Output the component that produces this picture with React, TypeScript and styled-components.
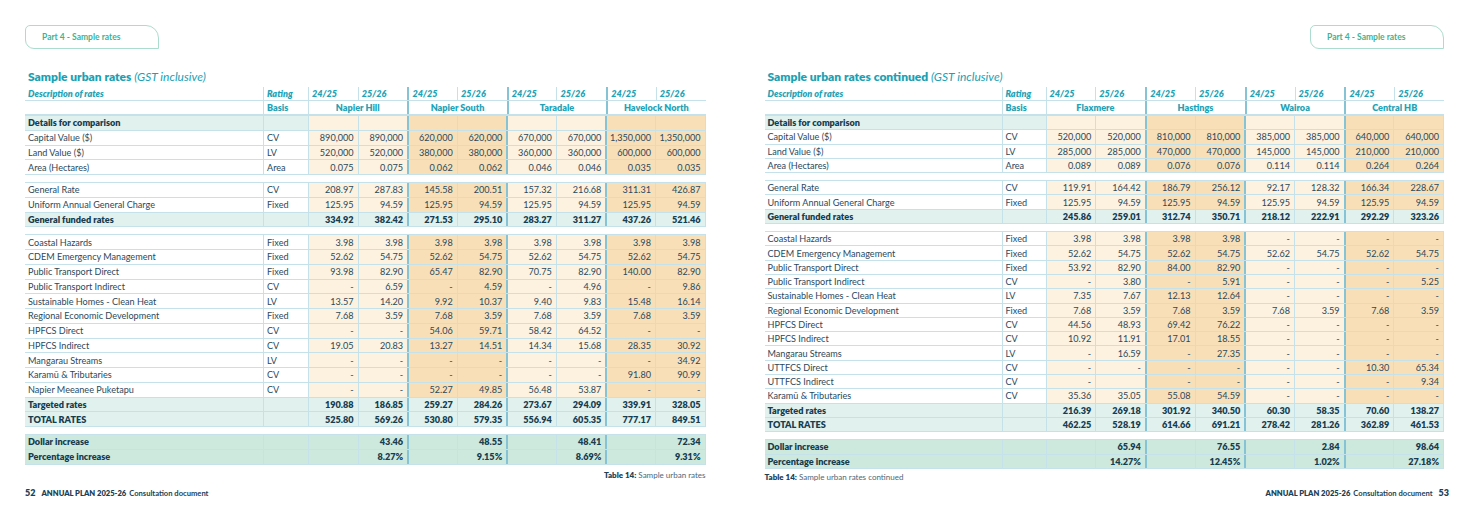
import styled, { createGlobalStyle } from "styled-components";

const GlobalStyle = createGlobalStyle`
  body {
    margin: 0;
    background: #ffffff;
    font-family: Lato, "Liberation Sans", sans-serif;
  }
`;

type Kind = "plain" | "section" | "subtotal" | "increase";
type Tone = "none" | "cream" | "tan" | "mint" | "deep";
type Edge = "none" | "thin" | "thick";

interface RowData {
  label: string;
  basis: string;
  values: string[];
  kind: Kind;
}

const tones: Record<Tone, string> = {
  none: "transparent",
  cream: "#fdf1df",
  tan: "#f8dfb8",
  mint: "#e1f1ee",
  deep: "#cde9de",
};

const Spread = styled.div`
  width: 1469px;
  height: 513px;
  display: grid;
  grid-template-columns: 1fr 1fr;
  overflow: hidden;
`;

const Page = styled.div<{ $side: "left" | "right" }>`
  display: flex;
  flex-direction: column;
  padding: ${(p) => (p.$side === "left" ? "25px 29px 15px 25px" : "25px 25px 15px 30px")};
`;

const Tab = styled.div<{ $side: "left" | "right" }>`
  align-self: ${(p) => (p.$side === "left" ? "flex-start" : "flex-end")};
  box-sizing: border-box;
  width: 134px;
  height: 24px;
  display: flex;
  align-items: center;
  padding-left: 16px;
  border: 1px solid #acdccd;
  border-radius: 5px 13px 0 9px;
  color: #3db38f;
  font-size: 8.5px;
  font-weight: 700;
`;

const Title = styled.h2<{ $after: number }>`
  margin: 21px 0 ${(p) => p.$after}px 3px;
  font-size: 12px;
  line-height: 14px;
  font-weight: 800;
  color: #1ba1b4;

  em {
    font-weight: 400;
  }
`;

const Grid = styled.div<{ $cols: string }>`
  --cols: ${(p) => p.$cols};
  display: flex;
  flex-direction: column;
`;

const Group = styled.div<{ $gap: number }>`
  margin-top: ${(p) => p.$gap}px;
  border-top: 1px solid #c5e2ea;
`;

const Row = styled.div<{ $h: number }>`
  box-sizing: border-box;
  display: grid;
  grid-template-columns: var(--cols);
  height: ${(p) => p.$h}px;
  border-bottom: 1px solid #c5e2ea;
  border-right: 1px solid #c5e2ea;
`;

const Cell = styled.div<{
  $tone: Tone;
  $edge: Edge;
  $align?: "left" | "right" | "center";
  $bold?: boolean;
  $span?: number;
}>`
  display: flex;
  align-items: center;
  justify-content: ${(p) =>
    p.$align === "right" ? "flex-end" : p.$align === "center" ? "center" : "flex-start"};
  grid-column: span ${(p) => p.$span ?? 1};
  padding: 0 4px 0 3px;
  background: ${(p) => tones[p.$tone]};
  border-left: ${(p) =>
    p.$edge === "thick" ? "2px solid #86c3d5" : p.$edge === "thin" ? "1px solid #c5e2ea" : "none"};
  font-size: 9.1px;
  font-weight: ${(p) => (p.$bold ? 800 : 400)};
  color: ${(p) => (p.$bold ? "#163c50" : "#2a495c")};
  white-space: nowrap;
  overflow: hidden;
`;

const HeadCell = styled(Cell)<{ $italic?: boolean }>`
  font-style: ${(p) => (p.$italic ? "italic" : "normal")};
  font-weight: 800;
  color: #1ea3b6;
`;

const Caption = styled.div<{ $align: "left" | "right"; $top: number }>`
  margin-top: ${(p) => p.$top}px;
  text-align: ${(p) => p.$align};
  font-size: 8px;
  line-height: 9px;
  color: #4b6879;

  b {
    color: #1d4257;
    font-weight: 800;
  }
`;

const Footer = styled.div<{ $align: "left" | "right" }>`
  margin-top: auto;
  display: flex;
  align-items: baseline;
  justify-content: ${(p) => (p.$align === "left" ? "flex-start" : "flex-end")};
  gap: 6px;
  margin-right: ${(p) => (p.$align === "right" ? "-5px" : "0")};
  color: #1c3f55;
  font-size: 7.6px;
  line-height: 10px;
`;

const PageNo = styled.span`
  font-size: 9px;
  font-weight: 800;
`;

const Plan = styled.span`
  b {
    font-weight: 800;
    margin-right: 3px;
  }
  span {
    font-weight: 700;
  }
`;

const v = (s: string) => s.split(" ").map((x) => (x === "_" ? "" : x));

const leftRegions = ["Napier Hill", "Napier South", "Taradale", "Havelock North"];
const rightRegions = ["Flaxmere", "Hastings", "Wairoa", "Central HB"];

const r = (label: string, basis: string, vals: string, kind: Kind = "plain"): RowData => ({
  label,
  basis,
  values: v(vals),
  kind,
});

const blank = "_ _ _ _ _ _ _ _";

const leftGroups: RowData[][] = [
  [
    r("Details for comparison", "", blank, "section"),
    r("Capital Value ($)", "CV", "890,000 890,000 620,000 620,000 670,000 670,000 1,350,000 1,350,000"),
    r("Land Value ($)", "LV", "520,000 520,000 380,000 380,000 360,000 360,000 600,000 600,000"),
    r("Area (Hectares)", "Area", "0.075 0.075 0.062 0.062 0.046 0.046 0.035 0.035"),
  ],
  [
    r("General Rate", "CV", "208.97 287.83 145.58 200.51 157.32 216.68 311.31 426.87"),
    r("Uniform Annual General Charge", "Fixed", "125.95 94.59 125.95 94.59 125.95 94.59 125.95 94.59"),
    r("General funded rates", "", "334.92 382.42 271.53 295.10 283.27 311.27 437.26 521.46", "subtotal"),
  ],
  [
    r("Coastal Hazards", "Fixed", "3.98 3.98 3.98 3.98 3.98 3.98 3.98 3.98"),
    r("CDEM Emergency Management", "Fixed", "52.62 54.75 52.62 54.75 52.62 54.75 52.62 54.75"),
    r("Public Transport Direct", "Fixed", "93.98 82.90 65.47 82.90 70.75 82.90 140.00 82.90"),
    r("Public Transport Indirect", "CV", "- 6.59 - 4.59 - 4.96 - 9.86"),
    r("Sustainable Homes - Clean Heat", "LV", "13.57 14.20 9.92 10.37 9.40 9.83 15.48 16.14"),
    r("Regional Economic Development", "Fixed", "7.68 3.59 7.68 3.59 7.68 3.59 7.68 3.59"),
    r("HPFCS Direct", "CV", "- - 54.06 59.71 58.42 64.52 - -"),
    r("HPFCS Indirect", "CV", "19.05 20.83 13.27 14.51 14.34 15.68 28.35 30.92"),
    r("Mangarau Streams", "LV", "- - - - - - - 34.92"),
    r("Karamū & Tributaries", "CV", "- - - - - - 91.80 90.99"),
    r("Napier Meeanee Puketapu", "CV", "- - 52.27 49.85 56.48 53.87 - -"),
    r("Targeted rates", "", "190.88 186.85 259.27 284.26 273.67 294.09 339.91 328.05", "subtotal"),
    r("TOTAL RATES", "", "525.80 569.26 530.80 579.35 556.94 605.35 777.17 849.51", "subtotal"),
  ],
  [
    r("Dollar increase", "", "_ 43.46 _ 48.55 _ 48.41 _ 72.34", "increase"),
    r("Percentage increase", "", "_ 8.27% _ 9.15% _ 8.69% _ 9.31%", "increase"),
  ],
];

const rightGroups: RowData[][] = [
  [
    r("Details for comparison", "", blank, "section"),
    r("Capital Value ($)", "CV", "520,000 520,000 810,000 810,000 385,000 385,000 640,000 640,000"),
    r("Land Value ($)", "LV", "285,000 285,000 470,000 470,000 145,000 145,000 210,000 210,000"),
    r("Area (Hectares)", "Area", "0.089 0.089 0.076 0.076 0.114 0.114 0.264 0.264"),
  ],
  [
    r("General Rate", "CV", "119.91 164.42 186.79 256.12 92.17 128.32 166.34 228.67"),
    r("Uniform Annual General Charge", "Fixed", "125.95 94.59 125.95 94.59 125.95 94.59 125.95 94.59"),
    r("General funded rates", "", "245.86 259.01 312.74 350.71 218.12 222.91 292.29 323.26", "subtotal"),
  ],
  [
    r("Coastal Hazards", "Fixed", "3.98 3.98 3.98 3.98 - - - -"),
    r("CDEM Emergency Management", "Fixed", "52.62 54.75 52.62 54.75 52.62 54.75 52.62 54.75"),
    r("Public Transport Direct", "Fixed", "53.92 82.90 84.00 82.90 - - - -"),
    r("Public Transport Indirect", "CV", "- 3.80 - 5.91 - - - 5.25"),
    r("Sustainable Homes - Clean Heat", "LV", "7.35 7.67 12.13 12.64 - - - -"),
    r("Regional Economic Development", "Fixed", "7.68 3.59 7.68 3.59 7.68 3.59 7.68 3.59"),
    r("HPFCS Direct", "CV", "44.56 48.93 69.42 76.22 - - - -"),
    r("HPFCS Indirect", "CV", "10.92 11.91 17.01 18.55 - - - -"),
    r("Mangarau Streams", "LV", "- 16.59 - 27.35 - - - -"),
    r("UTTFCS Direct", "CV", "- - - - - - 10.30 65.34"),
    r("UTTFCS Indirect", "CV", "- _ - - - - - 9.34"),
    r("Karamū & Tributaries", "CV", "35.36 35.05 55.08 54.59 - - - -"),
    r("Targeted rates", "", "216.39 269.18 301.92 340.50 60.30 58.35 70.60 138.27", "subtotal"),
    r("TOTAL RATES", "", "462.25 528.19 614.66 691.21 278.42 281.26 362.89 461.53", "subtotal"),
  ],
  [
    r("Dollar increase", "", "_ 65.94 _ 76.55 _ 2.84 _ 98.64", "increase"),
    r("Percentage increase", "", "_ 14.27% _ 12.45% _ 1.02% _ 27.18%", "increase"),
  ],
];

const valueEdge = (i: number): Edge => (i > 0 && i % 2 === 0 ? "thick" : "thin");

function labelTone(kind: Kind): Tone {
  if (kind === "plain") return "none";
  if (kind === "increase") return "deep";
  return "mint";
}

function valueTone(kind: Kind, i: number): Tone {
  if (kind === "subtotal") return "mint";
  if (kind === "increase") return "deep";
  return Math.floor(i / 2) % 2 === 0 ? "cream" : "tan";
}

interface TableProps {
  regions: string[];
  groups: RowData[][];
  cols: string;
  rowH: number;
  gap: number;
}

function RatesTable({ regions, groups, cols, rowH, gap }: TableProps) {
  return (
    <Grid $cols={cols}>
      <Row $h={14} style={{ borderRight: "none" }}>
        <HeadCell $tone="none" $edge="none" $italic>
          Description of rates
        </HeadCell>
        <HeadCell $tone="none" $edge="thin" $italic>
          Rating
        </HeadCell>
        {regions.flatMap((_, ri) =>
          ["24/25", "25/26"].map((y, k) => (
            <HeadCell key={`${ri}-${y}`} $tone="none" $edge={valueEdge(ri * 2 + k)} $italic>
              {y}
            </HeadCell>
          ))
        )}
      </Row>
      <Row $h={14} style={{ borderRight: "none" }}>
        <HeadCell $tone="none" $edge="none" />
        <HeadCell $tone="none" $edge="thin">
          Basis
        </HeadCell>
        {regions.map((name, ri) => (
          <HeadCell key={name} $tone="none" $edge={valueEdge(ri * 2)} $span={2} $align="center">
            {name}
          </HeadCell>
        ))}
      </Row>
      {groups.map((group, gi) => (
        <Group key={gi} $gap={gi === 0 ? 0 : gap}>
          {group.map((row) => {
            const bold = row.kind !== "plain";
            return (
              <Row key={row.label} $h={rowH}>
                <Cell $tone={labelTone(row.kind)} $edge="none" $bold={bold}>
                  {row.label}
                </Cell>
                <Cell $tone={labelTone(row.kind)} $edge="thin">
                  {row.basis}
                </Cell>
                {row.values.map((val, i) => (
                  <Cell
                    key={i}
                    $tone={valueTone(row.kind, i)}
                    $edge={valueEdge(i)}
                    $align="right"
                    $bold={row.kind === "subtotal" || row.kind === "increase"}
                  >
                    {val}
                  </Cell>
                ))}
              </Row>
            );
          })}
        </Group>
      ))}
    </Grid>
  );
}

function App() {
  return (
    <>
      <GlobalStyle />
      <Spread>
        <Page $side="left">
          <Tab $side="left">Part 4 - Sample rates</Tab>
          <Title $after={3}>
            Sample urban rates <em>(GST inclusive)</em>
          </Title>
          <RatesTable
            regions={leftRegions}
            groups={leftGroups}
            cols="238px 45px repeat(8, 1fr)"
            rowH={14.75}
            gap={7}
          />
          <Caption $align="right" $top={6}>
            <b>Table 14:</b> Sample urban rates
          </Caption>
          <Footer $align="left">
            <PageNo>52</PageNo>
            <Plan>
              <b>ANNUAL PLAN 2025-26</b>
              <span>Consultation document</span>
            </Plan>
          </Footer>
        </Page>
        <Page $side="right">
          <Tab $side="right">Part 4 - Sample rates</Tab>
          <Title $after={3}>
            Sample urban rates continued <em>(GST inclusive)</em>
          </Title>
          <RatesTable
            regions={rightRegions}
            groups={rightGroups}
            cols="237px 44px repeat(8, 1fr)"
            rowH={14.3}
            gap={7}
          />
          <Caption $align="left" $top={4}>
            <b>Table 14:</b> Sample urban rates continued
          </Caption>
          <Footer $align="right">
            <Plan>
              <b>ANNUAL PLAN 2025-26</b>
              <span>Consultation document</span>
            </Plan>
            <PageNo>53</PageNo>
          </Footer>
        </Page>
      </Spread>
    </>
  );
}

export default App;
